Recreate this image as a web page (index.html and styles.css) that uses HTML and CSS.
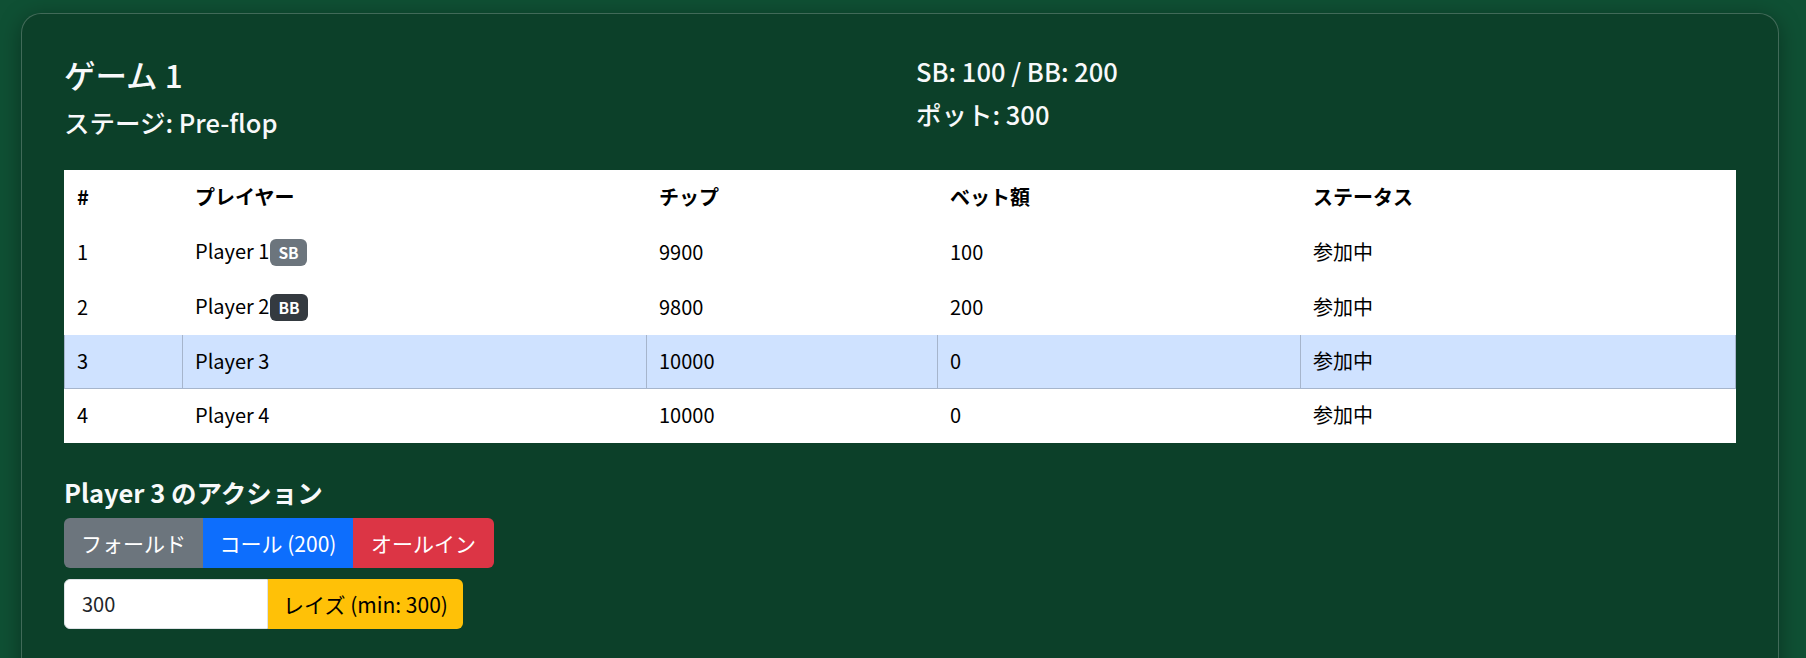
FILE: index.html
```html
<!DOCTYPE html>
<html lang="ja">
<head>
<meta charset="utf-8">
<title>ゲーム 1</title>
<link rel="stylesheet" href="styles.css">
</head>
<body>
<div class="card">
  <div class="info">
    <div class="info-col">
      <h2 class="title">ゲーム 1</h2>
      <div class="meta">ステージ: Pre-flop</div>
    </div>
    <div class="info-col">
      <div class="meta">SB: 100 / BB: 200</div>
      <div class="meta">ポット: 300</div>
    </div>
  </div>

  <table class="players">
    <colgroup>
      <col class="c-num"><col class="c-name"><col class="c-chip"><col class="c-bet"><col>
    </colgroup>
    <thead>
      <tr><th>#</th><th>プレイヤー</th><th>チップ</th><th>ベット額</th><th>ステータス</th></tr>
    </thead>
    <tbody>
      <tr><td>1</td><td>Player 1<span class="badge badge-sb">SB</span></td><td>9900</td><td>100</td><td>参加中</td></tr>
      <tr><td>2</td><td>Player 2<span class="badge badge-bb">BB</span></td><td>9800</td><td>200</td><td>参加中</td></tr>
      <tr class="active"><td>3</td><td>Player 3</td><td>10000</td><td>0</td><td>参加中</td></tr>
      <tr><td>4</td><td>Player 4</td><td>10000</td><td>0</td><td>参加中</td></tr>
    </tbody>
  </table>

  <h3 class="action-title">Player 3 のアクション</h3>
  <div class="btn-group">
    <button class="btn btn-fold">フォールド</button>
    <button class="btn btn-call">コール (200)</button>
    <button class="btn btn-allin">オールイン</button>
  </div>
  <div class="raise-group">
    <input class="raise-input" type="text" value="300">
    <button class="btn btn-raise">レイズ (min: 300)</button>
  </div>
</div>
</body>
</html>
```

FILE: styles.css
```css
* { box-sizing: border-box; }

html, body {
  margin: 0;
  height: 100%;
}

body {
  background: #0f5034;
  font-family: "Noto Sans CJK JP", "Noto Sans", sans-serif;
  color: #212529;
  padding: 13px 27px 0 21px;
  overflow: hidden;
}

.card {
  background: #0c4029;
  border: 1px solid rgba(255, 255, 255, 0.22);
  border-radius: 20px;
  padding: 42px 42px 60px 42px;
  box-shadow: 0 4px 22px rgba(0, 0, 0, 0.35);
}

.info {
  display: grid;
  grid-template-columns: 1fr 1fr;
  column-gap: 32px;
  color: #f8f9fa;
}

.title {
  margin: 0 0 13px 0;
  font-size: 31.5px;
  font-weight: 500;
  line-height: 1.2;
}

.meta {
  font-size: 25.5px;
  font-weight: 500;
  line-height: 1.2;
  margin-bottom: 12px;
}

.players {
  width: 100%;
  margin-top: 21px;
  border-collapse: collapse;
  table-layout: fixed;
  background: #fff;
  font-size: 20px;
  line-height: 29px;
  color: #000;
}

.c-num { width: 118px; }
.c-name { width: 464px; }
.c-chip { width: 291px; }
.c-bet { width: 363px; }

.players th,
.players td {
  text-align: left;
  padding: 11px 12px 13px 12px;
  border: 1px solid #fff;
  white-space: nowrap;
}

.players th { font-weight: 700; }

.players tr.active td {
  background: #cfe2ff;
  border-color: #a6b5cc;
}

.badge {
  display: inline-block;
  margin-left: 1px;
  padding: 0 8px;
  height: 27px;
  line-height: 27px;
  border-radius: 6px;
  color: #fff;
  font-size: 15.5px;
  font-weight: 700;
  vertical-align: 0;
}

.badge-sb { background: #6c757d; }
.badge-bb { background: #343a40; }

.action-title {
  margin: 34px 0 10px 0;
  font-size: 25.5px;
  font-weight: 700;
  line-height: 1.2;
  color: #f8f9fa;
}

.btn-group,
.raise-group {
  display: flex;
}

.raise-group {
  margin-top: 11px;
}

.btn {
  font-family: inherit;
  font-size: 21px;
  line-height: 30px;
  padding: 10px 0;
  border: 0;
  margin: 0;
  color: #fff;
  white-space: nowrap;
  text-align: center;
  cursor: pointer;
}

.btn-fold { background: #6c757d; border-radius: 6px 0 0 6px; width: 139px; }
.btn-call { background: #0d6efd; width: 150px; }
.btn-allin { background: #dc3545; border-radius: 0 6px 6px 0; width: 141px; }

.raise-input {
  width: 204px;
  height: 50px;
  font-family: inherit;
  font-size: 20px;
  color: #212529;
  padding: 0 17px;
  border: 1px solid #dee2e6;
  border-radius: 6px 0 0 6px;
  background: #fff;
}

.btn-raise {
  background: #ffc107;
  color: #000;
  border-radius: 0 6px 6px 0;
  width: 195px;
}
```
